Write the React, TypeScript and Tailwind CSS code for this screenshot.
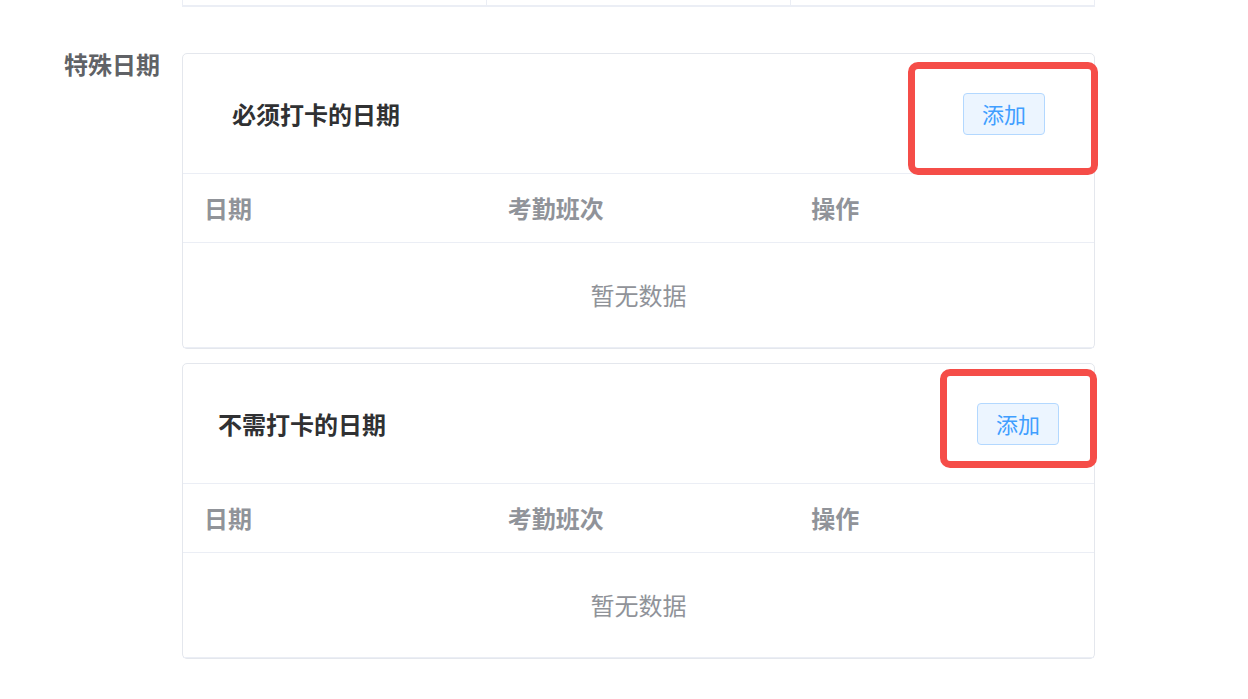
import React from "react";

const font = { fontFamily: '"Noto Sans CJK SC", "Noto Sans", sans-serif' };

function DateCard({
  title,
  padX,
  red,
}: {
  title: string;
  padX: string;
  red: React.ReactNode;
}) {
  return (
    <div className="relative rounded-[5px] border border-[#e4e7ed] bg-white">
      <div
        className={`flex h-[120px] items-center justify-between border-b border-[#ebeef5] ${padX}`}
      >
        <span className="text-[24px] font-bold text-[#303133]">{title}</span>
        <button className="flex h-[42px] w-[82px] items-center justify-center rounded-[4px] border border-[#b3d8ff] bg-[#ecf5ff] text-[22px] text-[#409eff]">
          添加
        </button>
      </div>
      <div className="grid h-[69px] grid-cols-3 items-center border-b border-[#ebeef5] text-[24px] font-bold text-[#909399]">
        <div className="pl-[21px]">日期</div>
        <div className="pl-[21px]">考勤班次</div>
        <div className="pl-[21px]">操作</div>
      </div>
      <div className="flex h-[105px] items-center justify-center border-b border-[#ebeef5] text-[24px] text-[#909399]">
        暂无数据
      </div>
      {red}
    </div>
  );
}

export default function App() {
  return (
    <div className="h-[699px] w-[1248px] overflow-hidden bg-white" style={font}>
      <div className="ml-[182px] flex h-[7px] w-[913px] border-x border-b-2 border-[#ebeef5]">
        <div className="w-[304px] border-r border-[#ebeef5]" />
        <div className="w-[304px] border-r border-[#ebeef5]" />
        <div className="flex-1" />
      </div>
      <div className="mt-[46px] flex">
        <div className="w-[182px] pr-[22px] text-right text-[24px] font-bold leading-[22px] text-[#606266]">
          特殊日期
        </div>
        <div className="flex w-[913px] flex-col gap-[14px]">
          <DateCard
            title="必须打卡的日期"
            padX="px-[49px]"
            red={
              <div className="absolute left-[725px] top-[8px] h-[113px] w-[190px] rounded-[10px] border-[7px] border-[#f54d48]" />
            }
          />
          <DateCard
            title="不需打卡的日期"
            padX="px-[35px]"
            red={
              <div className="absolute left-[757px] top-[5px] h-[99px] w-[157px] rounded-[10px] border-[7px] border-[#f54d48]" />
            }
          />
        </div>
      </div>
    </div>
  );
}
